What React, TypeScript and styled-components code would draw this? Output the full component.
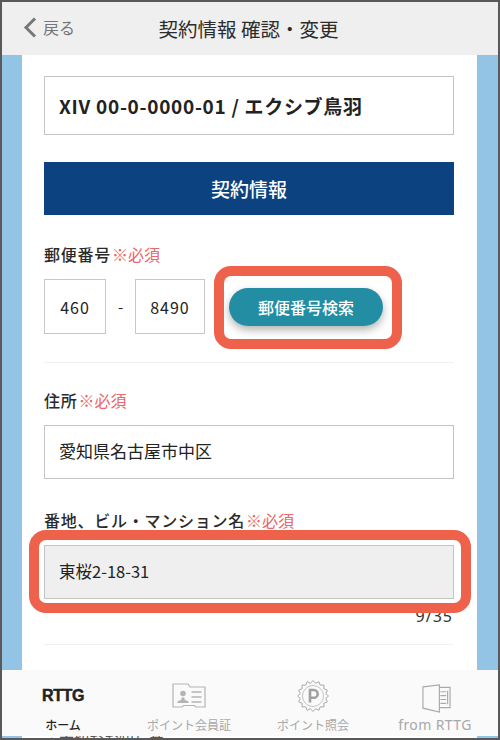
import styled, { createGlobalStyle } from 'styled-components'

const GlobalStyle = createGlobalStyle`
  html, body {
    margin: 0;
    padding: 0;
    background: #fff;
  }
  * {
    box-sizing: border-box;
  }
`

const Frame = styled.div`
  position: relative;
  width: 500px;
  height: 740px;
  display: flex;
  flex-direction: column;
  overflow: hidden;
  border: 2px solid #595959;
  background: #93c4e6;
  font-family: 'Noto Sans CJK JP', 'Noto Sans', sans-serif;
  color: #222;
`

const Header = styled.header`
  flex: none;
  height: 53px;
  position: relative;
  display: flex;
  align-items: center;
  justify-content: center;
  background: #efefef;
  font-size: 19.5px;
  padding-right: 3px;
  color: #2c2c2c;
`

const BackLink = styled.div`
  position: absolute;
  left: 21px;
  top: 13px;
  display: flex;
  align-items: center;
  gap: 6px;
  font-size: 16px;
  color: #777;
`

const Card = styled.main`
  flex: 1;
  min-height: 0;
  margin: 0 21px 0 20px;
  padding: 21px 23px 0 22px;
  background: #fff;
`

const ContractBox = styled.div`
  height: 59px;
  display: flex;
  align-items: center;
  padding-left: 14px;
  border: 1px solid #c4c4c4;
  font-size: 19px;
  font-weight: 700;
  letter-spacing: 0.7px;
`

const SectionBar = styled.div`
  height: 53px;
  margin-top: 27px;
  display: flex;
  align-items: center;
  justify-content: center;
  background: #0d4280;
  color: #fff;
  font-size: 19px;
  font-weight: 500;
`

const Field = styled.section<{ $gap: number }>`
  margin-top: ${p => p.$gap}px;
`

const Label = styled.div`
  height: 24px;
  display: flex;
  align-items: center;
  font-size: 16px;
  font-weight: 500;
  letter-spacing: 0.75px;
  color: #2a2a2a;
`

const Required = styled.span`
  margin-left: 1px;
  color: #e8696a;
  font-weight: 400;
  letter-spacing: 0;
`

const ZipRow = styled.div`
  margin-top: 13px;
  display: flex;
  align-items: center;
`

const ZipBox = styled.div<{ $width: number }>`
  width: ${p => p.$width}px;
  height: 55px;
  display: flex;
  align-items: center;
  justify-content: center;
  border: 1px solid #c8c8c8;
  font-size: 16px;
  letter-spacing: 1px;
`

const Dash = styled.span`
  width: 29px;
  text-align: center;
  font-size: 15px;
`

const SearchButton = styled.div`
  width: 154px;
  height: 38px;
  margin-left: 24px;
  display: flex;
  align-items: center;
  justify-content: center;
  border-radius: 19px;
  background: #238ea3;
  color: #fff;
  font-size: 16px;
  font-weight: 500;
  box-shadow: 0 4px 8px rgba(0, 0, 0, 0.3);
`

const Divider = styled.hr<{ $top: number }>`
  height: 1px;
  margin: ${p => p.$top}px 0 0;
  border: none;
  background: #f1f1f1;
`

const TextBox = styled.div<{ $disabled?: boolean }>`
  height: 54px;
  margin-top: 13px;
  display: flex;
  align-items: center;
  padding: 0 0 3px 14px;
  border: 1px solid #c4c4c4;
  background: ${p => (p.$disabled ? '#efefef' : '#fff')};
  font-size: ${p => (p.$disabled ? 16.5 : 17)}px;
  color: #222;
`

const Counter = styled.div`
  margin-top: 7px;
  text-align: right;
  padding-right: 1px;
  font-family: 'Noto Sans', sans-serif;
  font-size: 16px;
  letter-spacing: 1px;
  line-height: 20px;
  color: #333;
`

const Highlight = styled.div<{ $x: number; $y: number; $w: number; $h: number }>`
  position: absolute;
  left: ${p => p.$x}px;
  top: ${p => p.$y}px;
  width: ${p => p.$w}px;
  height: ${p => p.$h}px;
  border: 10px solid #ee614b;
  border-radius: 17px;
`

const TabBar = styled.nav`
  position: absolute;
  left: 0;
  right: 0;
  top: 668px;
  height: 66px;
  display: grid;
  grid-template-columns: 122px 130px 118px 1fr;
  background: #fafafa;
  overflow: hidden;
`

const Tab = styled.div<{ $active?: boolean }>`
  display: flex;
  flex-direction: column;
  align-items: center;
  color: ${p => (p.$active ? '#222' : '#a8a8a8')};
  font-size: 12px;
  font-weight: ${p => (p.$active ? 500 : 400)};
  line-height: 16px;
`

const TabLatin = styled.span`
  font-family: 'Noto Sans', sans-serif;
  font-size: 14px;
  letter-spacing: 0.4px;
`

const TabIcon = styled.div`
  height: 47px;
  padding-top: 4px;
  display: flex;
  align-items: center;
  justify-content: center;
`

const LogoText = styled.span`
  font-family: 'Liberation Sans', sans-serif;
  font-size: 16px;
  font-weight: 700;
  color: #222;
  letter-spacing: -0.4px;
  -webkit-text-stroke: 0.5px #222;
`

const Clipped = styled.div`
  position: absolute;
  left: 42px;
  top: 729px;
  font-size: 15px;
  line-height: 16px;
  color: #555;
`

const BookSvg = styled.svg`
  margin: 5px 0 0 3px;
`

function BackIcon() {
  return (
    <svg width="14" height="21" viewBox="0 0 14 21" fill="none" stroke="#777" strokeWidth="3">
      <path d="M12 1.5 3 10.5l9 9" />
    </svg>
  )
}

function MemberCardIcon() {
  return (
    <svg width="34" height="26" viewBox="0 0 34 26" fill="none" stroke="#b4b4b4" strokeWidth="1.2">
      <path d="M1 1h15l2 3h15v20H24l-1.5-1.5h-11L10 24H1z" />
      <circle cx="11" cy="10.5" r="2.8" fill="#b4b4b4" stroke="none" />
      <path d="M5.5 20v-1.5l4-2v-2h3v2l4 2V20z" fill="#b4b4b4" stroke="none" />
      <path d="M19.5 9h10M19.5 14h10M19.5 19h10" strokeWidth="1.4" />
    </svg>
  )
}

function PointIcon() {
  const spikes = Array.from({ length: 16 }, (_, i) => {
    const outer = i * (Math.PI / 8)
    const inner = outer + Math.PI / 16
    return `${16 + 15.5 * Math.cos(outer)},${16 + 15.5 * Math.sin(outer)} ${16 + 13 * Math.cos(inner)},${16 + 13 * Math.sin(inner)}`
  }).join(' ')
  return (
    <svg width="32" height="32" viewBox="0 0 32 32" fill="none" stroke="#aaa" strokeWidth="1">
      <polygon points={spikes} />
      <circle cx="16" cy="16" r="10.5" stroke="#c4c4c4" />
      <path d="M13 22.5V10h3.8a3.9 3.9 0 0 1 0 7.8H13" stroke="#a0a0a0" strokeWidth="2.6" />
    </svg>
  )
}

function BookIcon() {
  return (
    <BookSvg width="29" height="29" viewBox="0 0 30 30" fill="none" stroke="#aaa" strokeWidth="1.2">
      <path d="M1 3 18 1v28L1 25z" />
      <path d="M18 3.5h11v21H18" />
      <path d="M19 8h6M19 12h6M19 16h6M19 20h6" />
      <path d="M26.5 7v14" />
    </BookSvg>
  )
}

export default function App() {
  return (
    <>
      <GlobalStyle />
      <Frame>
        <Header>
          <BackLink>
            <BackIcon />
            戻る
          </BackLink>
          契約情報 確認・変更
        </Header>
        <Card>
          <ContractBox>XIV 00-0-0000-01 / エクシブ鳥羽</ContractBox>
          <SectionBar>契約情報</SectionBar>
          <Field $gap={27}>
            <Label>
              郵便番号<Required>※必須</Required>
            </Label>
            <ZipRow>
              <ZipBox $width={62}>460</ZipBox>
              <Dash>-</Dash>
              <ZipBox $width={70}>8490</ZipBox>
              <SearchButton>郵便番号検索</SearchButton>
            </ZipRow>
          </Field>
          <Divider $top={28} />
          <Field $gap={25}>
            <Label>
              住所<Required>※必須</Required>
            </Label>
            <TextBox>愛知県名古屋市中区</TextBox>
          </Field>
          <Field $gap={29}>
            <Label>
              番地、ビル・マンション名<Required>※必須</Required>
            </Label>
            <TextBox $disabled>東桜2-18-31</TextBox>
            <Counter>9/35</Counter>
          </Field>
          <Divider $top={18} />
        </Card>
        <Highlight $x={212} $y={264} $w={188} $h={83} />
        <Highlight $x={27} $y={528} $w={442} $h={83} />
        <Clipped>・大切なお知らせ</Clipped>
        <TabBar>
          <Tab $active>
            <TabIcon>
              <LogoText>RTTG</LogoText>
            </TabIcon>
            ホーム
          </Tab>
          <Tab>
            <TabIcon>
              <MemberCardIcon />
            </TabIcon>
            ポイント会員証
          </Tab>
          <Tab>
            <TabIcon>
              <PointIcon />
            </TabIcon>
            ポイント照会
          </Tab>
          <Tab>
            <TabIcon>
              <BookIcon />
            </TabIcon>
            <TabLatin>from RTTG</TabLatin>
          </Tab>
        </TabBar>
      </Frame>
    </>
  )
}
